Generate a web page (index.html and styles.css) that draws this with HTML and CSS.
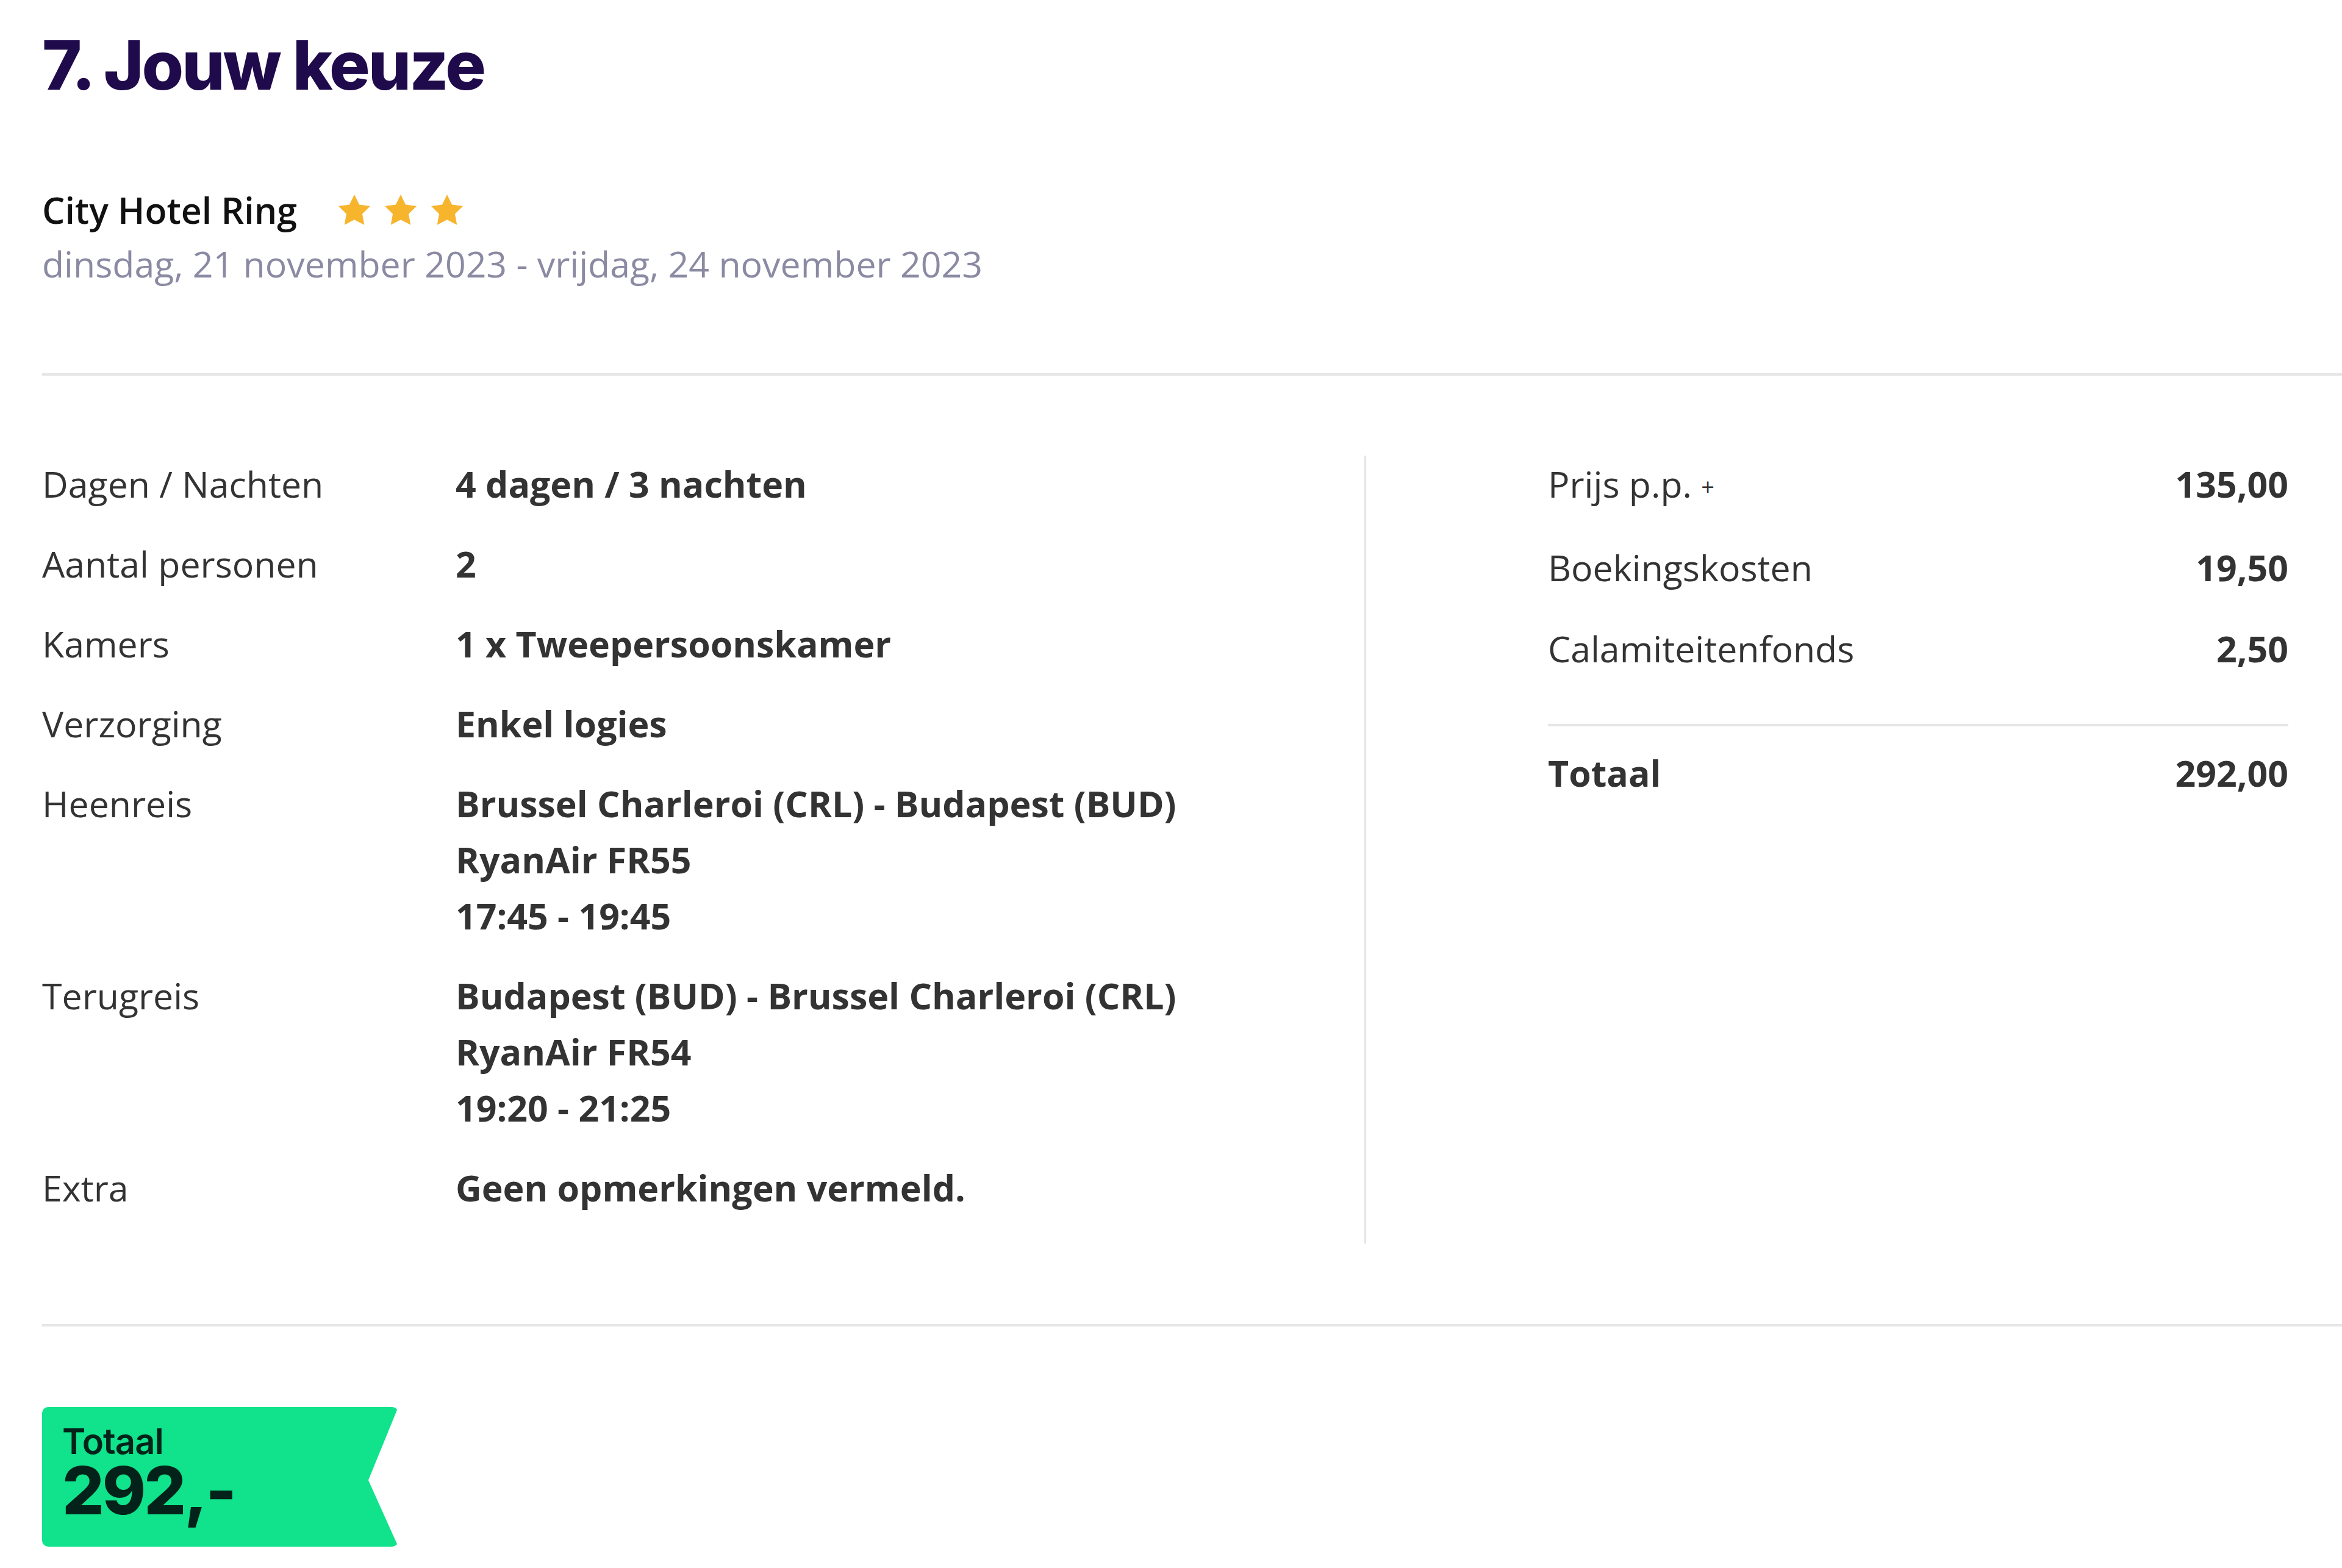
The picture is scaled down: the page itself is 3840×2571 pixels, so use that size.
FILE: index.html
```html
<!DOCTYPE html>
<html>
<head>
<meta name="viewport" content="width=device-width, initial-scale=1">
<link rel="stylesheet" href="styles.css">
</head>
<body>

<div class="page">
  <h1 class="title">7. Jouw keuze</h1>

  <div class="hotel">
    <div class="hotel-name">
      City Hotel Ring
      <span class="stars">
        <svg viewBox="1.6 1.5 20.8 20"><path d="M12 1.5l3.2 6.6 7.2 1-5.2 5.1 1.3 7.2L12 18l-6.5 3.4 1.3-7.2L1.6 9.1l7.2-1z"/></svg>
        <svg viewBox="1.6 1.5 20.8 20"><path d="M12 1.5l3.2 6.6 7.2 1-5.2 5.1 1.3 7.2L12 18l-6.5 3.4 1.3-7.2L1.6 9.1l7.2-1z"/></svg>
        <svg viewBox="1.6 1.5 20.8 20"><path d="M12 1.5l3.2 6.6 7.2 1-5.2 5.1 1.3 7.2L12 18l-6.5 3.4 1.3-7.2L1.6 9.1l7.2-1z"/></svg>
      </span>
    </div>
    <div class="hotel-dates">dinsdag, 21 november 2023 - vrijdag, 24 november 2023</div>
  </div>

  <hr class="line">

  <div class="details">
    <!-- left: trip info -->
    <div class="info">
      <div class="label">Dagen / Nachten</div>
      <div class="value">4 dagen / 3 nachten</div>

      <div class="label">Aantal personen</div>
      <div class="value">2</div>

      <div class="label">Kamers</div>
      <div class="value">1 x Tweepersoonskamer</div>

      <div class="label">Verzorging</div>
      <div class="value">Enkel logies</div>

      <div class="label">Heenreis</div>
      <div class="value">Brussel Charleroi (CRL) - Budapest (BUD)<br>RyanAir FR55<br>17:45 - 19:45</div>

      <div class="label">Terugreis</div>
      <div class="value">Budapest (BUD) - Brussel Charleroi (CRL)<br>RyanAir FR54<br>19:20 - 21:25</div>

      <div class="label">Extra</div>
      <div class="value">Geen opmerkingen vermeld.</div>
    </div>

    <!-- right: price -->
    <div class="prices">
      <div class="price-rows">
        <div class="price-row"><span>Prijs p.p. <span class="plus">+</span></span><b>135,00</b></div>
        <div class="price-row"><span>Boekingskosten</span><b>19,50</b></div>
        <div class="price-row"><span>Calamiteitenfonds</span><b>2,50</b></div>
      </div>
      <div class="price-row total"><b>Totaal</b><b>292,00</b></div>
    </div>
  </div>

  <hr class="line bottom">

  <div class="badge">
    <div class="badge-label">Totaal</div>
    <div class="badge-amount">292,-</div>
  </div>
</div>

</body>
</html>
```

FILE: styles.css
```css
* {box-sizing: border-box;}

body {
  margin: 0;
  background: #fff;
  font-family: "Open Sans", Arial, sans-serif;
  color: #333;
}

.page {
  padding: 39px 0 0 69px;
}

/* Heading */
.title {
  margin: 0;
  font-family: Inter, "Open Sans", sans-serif;
  font-weight: 800;
  font-size: 111px;
  line-height: 136px;
  letter-spacing: -3px;
  color: #1f0a4b;
}

/* Hotel */
.hotel {
  margin-top: 125px;
  font-size: 59px;
  line-height: 88px;
}

.hotel-name {
  display: flex;
  align-items: center;
  font-weight: 600;
  color: #111;
}

.stars {
  display: flex;
  gap: 24px;
  margin-left: 68px;
}

.stars svg {
  width: 52px;
  height: 50px;
  fill: #f7b52d;
}

.hotel-dates {
  color: #8b8aa3;
}

.line {
  margin: 136px 0 0;
  border: none;
  height: 4px;
  background: #e6e6e6;
}

.line.bottom {
  margin-top: 132px;
}

/* Details */
.details {
  display: grid;
  grid-template-columns: 2171px 1fr;
  margin-top: 131px;
  font-size: 59px;
  line-height: 92px;
}

.info {
  display: grid;
  grid-template-columns: 678px 1fr;
  row-gap: 39px;
  padding-bottom: 46px;
  border-right: 3px solid #e4e4e4;
}

.value {
  font-weight: 700;
}

.prices {
  padding: 0 88px 0 298px;
}

.price-rows {
  display: flex;
  flex-direction: column;
  gap: 41px;
  padding-bottom: 78px;
  border-bottom: 4px solid #e6e6e6;
}

.price-row {
  display: flex;
  justify-content: space-between;
}

.price-row.total {
  margin-top: 30px;
}

.plus {
  font-size: 38px;
  margin-left: 0;
  vertical-align: 4px;
}

/* Badge */
.badge {
  margin-top: 132px;
  width: 584px;
  height: 229px;
  padding: 21px 0 0 33px;
  background: #10e38b;
  border-radius: 10px;
  clip-path: polygon(0 0, 100% 0, 91.6% 52.4%, 100% 100%, 0 100%);
  color: #03231a;
  font-family: Inter, "Open Sans", sans-serif;
}

.badge-label {
  font-size: 58px;
  font-weight: 600;
  line-height: 70px;
  letter-spacing: -1px;
}

.badge-amount {
  font-size: 108px;
  font-weight: 800;
  line-height: 92px;
  letter-spacing: -3px;
}
```
